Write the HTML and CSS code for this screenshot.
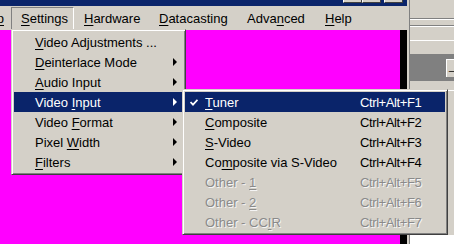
FILE: index.html
```html
<!DOCTYPE html>
<html>
<head>
<meta charset="utf-8">
<link rel="stylesheet" href="styles.css">
</head>
<body>
<div class="screen">
  <div class="app">
    <div class="titlebar">
      <div class="tb-buttons">
        <span class="tb-btn"></span><span class="tb-btn"></span><span class="tb-gap"></span><span class="tb-btn"></span>
      </div>
    </div>
    <div class="menubar">
      <span class="mb-item mb-setup">Setu<u>p</u></span>
      <span class="mb-item mb-settings pressed"><u>S</u>ettings</span>
      <span class="mb-item mb-hardware"><u>H</u>ardware</span>
      <span class="mb-item mb-datacasting"><u>D</u>atacasting</span>
      <span class="mb-item mb-advanced">Adva<u>n</u>ced</span>
      <span class="mb-item"><u>H</u>elp</span>
    </div>
    <div class="client">
      <div class="canvas"></div>
      <div class="blackbar"></div>
    </div>
  </div>
  <div class="side">
    <div class="pane">
      <div class="sp sp-top"></div>
      <div class="sp-line-dark"></div>
      <div class="sp-line-light"></div>
      <div class="sp sp-a"></div>
      <div class="sp-line-dark"></div>
      <div class="sp-line-light"></div>
      <div class="sp sp-b"></div>
      <div class="sp-line-light"></div>
      <div class="sp sp-c"></div>
      <div class="sp-line-dark"></div>
      <div class="sp-dark"><span class="sp-btn">_</span></div>
      <div class="sp sp-d"></div>
      <div class="sp-line-light"></div>
      <div class="sp sp-e"></div>
      <div class="sp-white"></div>
    </div>
  </div>

  <div class="menu menu-main">
    <div class="mi"><span class="mi-check"></span><span class="mi-label"><u>V</u>ideo Adjustments ...</span><span class="mi-arrow none"></span></div>
    <div class="mi"><span class="mi-check"></span><span class="mi-label"><u>D</u>einterlace Mode</span><span class="mi-arrow"></span></div>
    <div class="mi"><span class="mi-check"></span><span class="mi-label"><u>A</u>udio Input</span><span class="mi-arrow"></span></div>
    <div class="mi active"><span class="mi-check"></span><span class="mi-label">Video <u>I</u>nput</span><span class="mi-arrow"></span></div>
    <div class="mi"><span class="mi-check"></span><span class="mi-label">Video <u>F</u>ormat</span><span class="mi-arrow"></span></div>
    <div class="mi"><span class="mi-check"></span><span class="mi-label">Pixel <u>W</u>idth</span><span class="mi-arrow"></span></div>
    <div class="mi"><span class="mi-check"></span><span class="mi-label"><u>F</u>ilters</span><span class="mi-arrow"></span></div>
  </div>

  <div class="menu menu-sub">
    <div class="si active">
      <span class="si-check"><svg width="8" height="7" viewBox="0 0 8 7"><polyline points="0.5,3 3,5.6 7.5,0.8" fill="none" stroke="#fff" stroke-width="1.8"/></svg></span>
      <span class="si-label"><u>T</u>uner</span><span class="si-key">Ctrl+Alt+F1</span>
    </div>
    <div class="si"><span class="si-check"></span><span class="si-label"><u>C</u>omposite</span><span class="si-key">Ctrl+Alt+F2</span></div>
    <div class="si"><span class="si-check"></span><span class="si-label"><u>S</u>-Video</span><span class="si-key">Ctrl+Alt+F3</span></div>
    <div class="si"><span class="si-check"></span><span class="si-label">Co<u>m</u>posite via S-Video</span><span class="si-key">Ctrl+Alt+F4</span></div>
    <div class="si disabled"><span class="si-check"></span><span class="si-label">Other - <u>1</u></span><span class="si-key">Ctrl+Alt+F5</span></div>
    <div class="si disabled"><span class="si-check"></span><span class="si-label">Other - <u>2</u></span><span class="si-key">Ctrl+Alt+F6</span></div>
    <div class="si disabled"><span class="si-check"></span><span class="si-label">Other - CC<u>I</u>R</span><span class="si-key">Ctrl+Alt+F7</span></div>
  </div>
</div>
</body>
</html>
```
FILE: styles.css
```css
* { box-sizing: border-box; }
html, body { margin: 0; padding: 0; }
body {
  width: 454px;
  height: 244px;
  overflow: hidden;
  font-family: "Liberation Sans", Arial, sans-serif;
  font-size: 13px;
  color: #000;
}
u { text-decoration: underline; text-underline-offset: 2px; text-decoration-thickness: 1px; }

.screen {
  position: relative;
  width: 454px;
  height: 244px;
  display: grid;
  grid-template-columns: 407px 47px;
  overflow: hidden;
}

.app { display: flex; flex-direction: column; height: 244px; }
.titlebar {
  height: 6px;
  background: #0a246a;
  display: flex;
  justify-content: flex-end;
  padding-right: 4px;
}
.tb-buttons { display: flex; align-items: flex-start; height: 3px; }
.tb-btn {
  width: 19px; height: 3px; background: #d4d0c8;
  border-right: 1px solid #404040; border-bottom: 1px solid #404040;
  border-left: 1px solid #fff;
}
.tb-gap { width: 3px; }

.menubar {
  height: 24px;
  background: #d4d0c8;
  display: flex;
  align-items: stretch;
  padding-top: 1px;
  white-space: nowrap;
}
.mb-item {
  display: flex;
  align-items: center;
  padding: 0 0 1px 9px;
  border: 1px solid transparent;
  flex: none;
}
.mb-setup { width: 51px; margin-left: -40px; }
.mb-settings { width: 63px; }
.mb-hardware { width: 75px; }
.mb-datacasting { width: 88px; }
.mb-advanced { width: 78px; }
.pressed { border-color: #808080 #fff #fff #808080; }

.client { flex: 1; display: flex; }
.canvas { flex: 1; background: #ff00ff; }
.blackbar { width: 7px; background: #000; }

.side { background: #d4d0c8; padding-left: 2px; }
.pane { border-left: 1px solid #808080; height: 244px; display: flex; flex-direction: column; }
.sp { background: #d4d0c8; }
.sp-top { height: 18px; }
.sp-a { height: 5px; }
.sp-b { height: 13px; }
.sp-c { height: 13px; }
.sp-d { height: 9px; }
.sp-e { flex: 1; }
.sp-line-dark { height: 1px; background: #808080; }
.sp-line-light { height: 1px; background: #fff; }
.sp-dark {
  height: 26px;
  background: #808080;
  display: flex;
  justify-content: flex-end;
  align-items: center;
}
.sp-btn {
  width: 8px; height: 18px; background: #d4d0c8;
  border-top: 1px solid #fff; border-left: 1px solid #fff;
  font-size: 11px; line-height: 12px; padding-left: 2px; overflow: hidden;
}
.sp-white { height: 9px; background: #fff; }

.menu {
  position: absolute;
  background: #d4d0c8;
  border: 1px solid;
  border-color: #d4d0c8 #404040 #404040 #d4d0c8;
  box-shadow: inset 1px 1px 0 #fff, inset -1px -1px 0 #808080;
  padding: 2px;
  white-space: nowrap;
}
.menu-main { left: 11px; top: 29px; width: 175px; }
.menu-sub { left: 182px; top: 89px; width: 266px; }

.mi, .si { height: 20px; display: flex; align-items: center; }
.mi.active, .si.active { background: #0a246a; color: #fff; }
.mi-check { width: 21px; flex: none; }
.mi-label { flex: 1; }
.mi-arrow {
  width: 0; height: 0; flex: none;
  border-left: 4px solid #000;
  border-top: 4px solid transparent;
  border-bottom: 4px solid transparent;
  margin-right: 6px;
}
.mi-arrow.none { border-left-color: transparent; }
.mi.active .mi-arrow { border-left-color: #fff; }

.si-check { width: 20px; flex: none; display: flex; padding-left: 5px; padding-top: 1px; }
.si-label { width: 155px; flex: none; }
.si-key { flex: 1; letter-spacing: -0.4px; }
.si.disabled { color: #8a8a8a; text-shadow: 1px 1px 0 #f4f4f4; }
```
